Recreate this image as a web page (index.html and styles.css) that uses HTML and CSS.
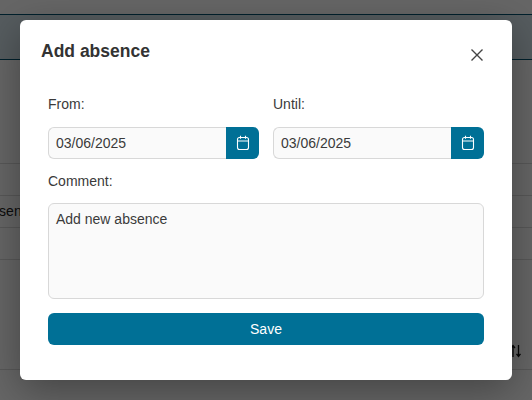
FILE: index.html
```html
<!DOCTYPE html>
<html lang="en">
  <head>
    <meta charset="utf-8" />
    <title>Add absence</title>
    <link rel="stylesheet" href="styles.css">
  </head>
  <body>
    <div class="page">
      <div class="page-top"></div>
      <div class="page-header"></div>
      <div class="page-gap"></div>
      <div class="row"></div>
      <div class="row row-text">Absence</div>
      <div class="row"></div>
      <div class="row-sort">
        <svg width="12" height="14" viewBox="0 0 12 14" fill="none" stroke="#111" stroke-width="1.3">
          <path d="M3 13V2M1 4 3 1.6 5 4" />
          <path d="M8.5 1v11M6.5 9.8 8.5 12.4l2-2.6" />
        </svg>
      </div>
    </div>

    <div class="overlay">
      <div class="modal">
        <div class="modal-header">
          <h1 class="modal-title">Add absence</h1>
          <button type="button" class="modal-close" aria-label="Close">
            <svg width="14" height="14" viewBox="0 0 14 14" fill="none" stroke="#444" stroke-width="1.4">
              <path d="M1.5 1.5l11 11M12.5 1.5l-11 11" />
            </svg>
          </button>
        </div>
        <form class="modal-body">
          <div class="dates">
            <div class="field">
              <label class="label">From:</label>
              <div class="date-input">
                <input type="text" class="input" value="03/06/2025" />
                <button type="button" class="date-button" aria-label="Pick date">
                  <svg width="14" height="16" viewBox="0 0 14 16" fill="none" stroke="#fff" stroke-width="1.1">
                    <rect x="1.5" y="2.5" width="11" height="12" rx="2" />
                    <path d="M1.5 6h11M4.5 .8v3M9.5 .8v3" />
                  </svg>
                </button>
              </div>
            </div>
            <div class="field">
              <label class="label">Until:</label>
              <div class="date-input">
                <input type="text" class="input" value="03/06/2025" />
                <button type="button" class="date-button" aria-label="Pick date">
                  <svg width="14" height="16" viewBox="0 0 14 16" fill="none" stroke="#fff" stroke-width="1.1">
                    <rect x="1.5" y="2.5" width="11" height="12" rx="2" />
                    <path d="M1.5 6h11M4.5 .8v3M9.5 .8v3" />
                  </svg>
                </button>
              </div>
            </div>
          </div>
          <label class="label label-comment">Comment:</label>
          <textarea class="textarea">Add new absence</textarea>
          <button type="button" class="save">Save</button>
        </form>
      </div>
    </div>
  </body>
</html>
```

FILE: styles.css
```css
html,
body {
  height: 100%;
}
body {
  margin: 0;
  padding: 0;
  overflow: hidden;
  background-color: white;
  font-family: "Liberation Sans", Arial, sans-serif;
  font-size: 14px;
  color: #3a3a3a;
}

/* page behind the dialog */
.page {
  height: 400px;
}
.page-top {
  height: 14px;
}
.page-header {
  height: 44px;
  background-color: #d6e6ee;
  border-top: 1px solid #00506f;
  border-bottom: 1px solid #00506f;
}
.page-gap {
  height: 103px;
  border-bottom: 1px solid #dcdcdc;
}
.row {
  height: 31px;
  border-bottom: 1px solid #dcdcdc;
}
.row-text {
  line-height: 31px;
  margin-left: -18px;
  color: #222;
}
.row-sort {
  height: 110px;
  border-bottom: 1px solid #dcdcdc;
  display: flex;
  justify-content: flex-end;
  align-items: flex-end;
  padding: 0 10px 11px 0;
  box-sizing: border-box;
}

.overlay {
  position: absolute;
  top: 0;
  left: 0;
  right: 0;
  bottom: 0;
  padding: 20px;
  box-sizing: border-box;
  background-color: rgba(0, 0, 0, 0.6);
}
.modal {
  height: 360px;
  box-sizing: border-box;
  background-color: white;
  border-radius: 6px;
  box-shadow: 0 10px 40px rgba(0, 0, 0, 0.35);
}
.modal-header {
  display: flex;
  justify-content: space-between;
  padding: 21px 28px 0 21px;
}
.modal-title {
  margin: 0;
  font-size: 17.5px;
  line-height: 21px;
  font-weight: bold;
  color: #333;
}
.modal-close {
  margin: 7px 0 0 0;
  padding: 0;
  width: 14px;
  height: 14px;
  border: 0;
  background: none;
  display: block;
}
.modal-close svg {
  display: block;
}
.modal-body {
  display: flex;
  flex-direction: column;
  padding: 34px 28px 0 28px;
}
.dates {
  display: flex;
  gap: 14px;
}
.field {
  flex: 1 1 0;
  min-width: 0;
}
.label {
  display: block;
  height: 16px;
  line-height: 16px;
}
.field .label {
  margin-bottom: 15px;
}
.date-input {
  display: flex;
  height: 32px;
}
.input {
  flex: 1;
  width: 0;
  min-width: 0;
  box-sizing: border-box;
  margin: 0;
  padding: 0 7px;
  border: 1px solid #d8d8d8;
  border-right: 0;
  border-radius: 6px 0 0 6px;
  background-color: #fafafa;
  font-family: inherit;
  font-size: 14px;
  color: #3a3a3a;
}
.date-button {
  width: 33px;
  padding: 0;
  border: 0;
  border-radius: 0 6px 6px 0;
  background-color: #007096;
  display: flex;
  align-items: center;
  justify-content: center;
}
.label-comment {
  margin-top: 14px;
  margin-bottom: 14px;
}
.textarea {
  height: 96px;
  box-sizing: border-box;
  margin: 0;
  padding: 7px;
  border: 1px solid #d8d8d8;
  border-radius: 6px;
  background-color: #fafafa;
  font-family: inherit;
  font-size: 14px;
  line-height: 16px;
  color: #3a3a3a;
  resize: none;
  display: block;
}
.save {
  margin-top: 14px;
  height: 32px;
  border: 0;
  border-radius: 6px;
  background-color: #007096;
  color: white;
  font-family: inherit;
  font-size: 14px;
}
```
